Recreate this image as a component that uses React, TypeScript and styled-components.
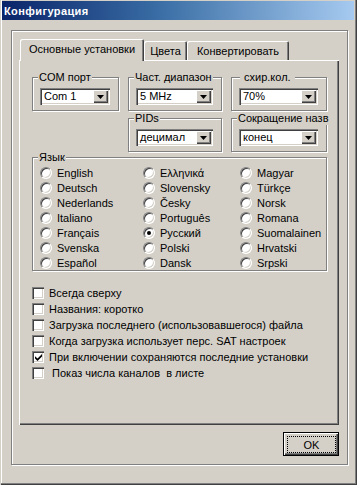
import React from "react";
import styled, { createGlobalStyle } from "styled-components";

const GlobalStyle = createGlobalStyle`
  html, body {
    margin: 0;
    padding: 0;
    background: #d4d0c8;
  }
  body {
    font-family: "Liberation Sans", Arial, sans-serif;
    font-size: 11px;
    color: #000;
  }
`;

const Window = styled.div`
  width: 357px;
  height: 485px;
  box-sizing: border-box;
  padding: 1px 3px 3px 2px;
  background: #d4d0c8;
  box-shadow: inset 1px 0 #d4d0c8, inset -1px -1px #404040, inset -2px -2px #808080,
    inset 2px 0 #fff;
  display: flex;
  flex-direction: column;
`;

const TitleBar = styled.div`
  height: 19px;
  display: flex;
  align-items: center;
  padding-left: 2px;
  background: linear-gradient(to right, #0a246a 0%, #3a6ea5 45%, #a6caf0 100%);
  color: #fff;
  font-weight: bold;
  font-size: 11px;
  letter-spacing: 0.4px;
`;

const Frame = styled.div`
  margin: 10px 6px 0 9px;
  height: 435px;
  box-sizing: border-box;
  border: 1px solid #808080;
  box-shadow: inset 1px 1px #fff, 1px 1px #fff;
  padding: 8px 8px 8px 7px;
  display: flex;
  flex-direction: column;
`;

const TabStrip = styled.div`
  display: flex;
  align-items: flex-end;
  padding-left: 1px;
  height: 21px;
`;

const Tab = styled.div<{ $active?: boolean; $w: number }>`
  position: relative;
  z-index: ${({ $active }) => ($active ? 1 : 0)};
  width: ${({ $w }) => $w}px;
  height: ${({ $active }) => ($active ? 22 : 19)}px;
  margin-bottom: ${({ $active }) => ($active ? -1 : 0)}px;
  box-sizing: border-box;
  background: #d4d0c8;
  border-top-left-radius: 2px;
  border-top-right-radius: 2px;
  box-shadow: inset 1px 1px #fff, inset -1px 0 #404040, inset -2px 0 #808080;
  display: flex;
  align-items: center;
  justify-content: center;
  padding-bottom: ${({ $active }) => ($active ? 3 : 0)}px;
  white-space: nowrap;
`;

const Panel = styled.div`
  height: 365px;
  box-sizing: border-box;
  box-shadow: inset 1px 1px #fff, inset -1px -1px #404040, inset -2px -2px #808080;
  padding: 17px 12px 0 13px;
`;

const GroupGrid = styled.div`
  display: grid;
  grid-template-columns: 87px 94px 96px;
  column-gap: 9px;
  row-gap: 7px;
`;

const Group = styled.div<{ $h: number; $col?: number }>`
  grid-column: ${({ $col }) => $col ?? "auto"};
  height: ${({ $h }) => $h}px;
  box-sizing: border-box;
  border: 1px solid #808080;
  box-shadow: inset 1px 1px #fff, 1px 1px #fff;
  white-space: nowrap;
`;

const Legend = styled.div<{ $indent?: number }>`
  width: fit-content;
  height: 13px;
  line-height: 13px;
  margin: -7px 0 -6px ${({ $indent }) => $indent ?? 5}px;
  padding: 0 1px;
  background: #d4d0c8;
  white-space: pre;
`;

const ComboWrap = styled.div`
  padding: 10px 8px 0 7px;
`;

const Combo = styled.div`
  height: 17px;
  box-sizing: border-box;
  background: #fff;
  box-shadow: inset 1px 1px #808080, inset 2px 2px #404040, inset -1px -1px #fff,
    inset -2px -2px #d4d0c8;
  display: flex;
  align-items: center;
  padding: 2px;
`;

const ComboText = styled.span`
  flex: 1;
  padding-left: 2px;
  line-height: 13px;
`;

const DropButton = styled.div`
  width: 15px;
  height: 13px;
  box-sizing: border-box;
  background: #d4d0c8;
  box-shadow: inset 1px 1px #fff, inset -1px -1px #404040, inset -2px -2px #808080;
  display: flex;
  align-items: center;
  justify-content: center;
`;

const LangGroup = styled(Group)`
  margin-top: 5px;
  width: 295px;
`;

const RadioGrid = styled.div`
  display: grid;
  grid-template-columns: 103px 97px 1fr;
  grid-template-rows: repeat(7, 15px);
  grid-auto-flow: column;
  padding: 7px 0 0 7px;
`;

const Option = styled.label`
  display: flex;
  align-items: center;
  gap: 5px;
  white-space: nowrap;
`;

const CheckOption = styled(Option)`
  white-space: pre;
`;

const RadioDot = styled.span<{ $on?: boolean }>`
  width: 12px;
  height: 12px;
  flex: none;
  box-sizing: border-box;
  border-radius: 50%;
  border: 1px solid;
  border-color: #808080 #fff #fff #808080;
  background: #fff;
  box-shadow: inset 1px 1px #404040, inset -1px -1px #d4d0c8;
  display: flex;
  align-items: center;
  justify-content: center;
  &::after {
    content: "";
    width: 4px;
    height: 4px;
    border-radius: 50%;
    background: ${({ $on }) => ($on ? "#000" : "transparent")};
  }
`;

const CheckList = styled.div`
  margin-top: 14px;
  display: grid;
  grid-auto-rows: 16px;
`;

const CheckBox = styled.span`
  width: 12px;
  height: 12px;
  flex: none;
  box-sizing: border-box;
  background: #fff;
  box-shadow: inset 1px 1px #808080, inset 2px 2px #404040, inset -1px -1px #fff,
    inset -2px -2px #d4d0c8;
  display: flex;
  align-items: center;
  justify-content: center;
`;

const Footer = styled.div`
  display: flex;
  justify-content: flex-end;
  margin-top: 7px;
`;

const OkButton = styled.button`
  width: 56px;
  height: 24px;
  box-sizing: border-box;
  padding: 3px 2px 2px 3px;
  border: 1px solid #000;
  background: #d4d0c8;
  box-shadow: inset 1px 1px #fff, inset -1px -1px #404040, inset -2px -2px #808080;
  font-family: "Liberation Sans", Arial, sans-serif;
  font-size: 11px;
  color: #000;
  display: flex;
`;

const FocusRect = styled.span`
  flex: 1;
  border: 1px dotted #000;
  display: flex;
  align-items: center;
  justify-content: center;
`;

const Arrow = () => (
  <svg width="7" height="4" viewBox="0 0 7 4">
    <path d="M0 0h7L3.5 4z" fill="#000" />
  </svg>
);

const Check = () => (
  <svg width="7" height="7" viewBox="0 0 7 7">
    <path d="M0 2.2 L2.5 4.6 L7 0 V2.4 L2.5 7 L0 4.6 Z" fill="#000" />
  </svg>
);

const ComboGroup = ({
  label,
  value,
  indent,
  col,
}: {
  label: string;
  value: string;
  indent?: number;
  col?: number;
}) => (
  <Group $h={34} $col={col}>
    <Legend $indent={indent}>{label}</Legend>
    <ComboWrap>
      <Combo>
        <ComboText>{value}</ComboText>
        <DropButton>
          <Arrow />
        </DropButton>
      </Combo>
    </ComboWrap>
  </Group>
);

const languages = [
  "English", "Deutsch", "Nederlands", "Italiano", "Français", "Svenska", "Español",
  "Ελληνικά", "Slovensky", "Česky", "Português", "Русский", "Polski", "Dansk",
  "Magyar", "Türkçe", "Norsk", "Romana", "Suomalainen", "Hrvatski", "Srpski",
];

const options = [
  { text: "Всегда сверху", on: false },
  { text: "Названия: коротко", on: false },
  { text: "Загрузка последнего (использовавшегося) файла", on: false },
  { text: "Когда загрузка использует перс. SAT настроек", on: false },
  { text: "При включении сохраняются последние установки", on: true },
  { text: " Показ числа каналов  в листе", on: false },
];

export default function App() {
  return (
    <>
      <GlobalStyle />
      <Window>
        <TitleBar>Конфигурация</TitleBar>
        <Frame>
          <TabStrip>
            <Tab $active $w={124}>Основные установки</Tab>
            <Tab $w={43}>Цвета</Tab>
            <Tab $w={102}>Конвертировать</Tab>
          </TabStrip>
          <Panel>
            <GroupGrid>
              <ComboGroup label="COM порт" value="Com 1" />
              <ComboGroup label="Част. диапазон" value="5 MHz" />
              <ComboGroup label=" схир.кол. " value="70%" indent={8} />
              <ComboGroup label="PIDs" value="децимал" col={2} />
              <ComboGroup label="Сокращение назв" value="конец" indent={5} />
            </GroupGrid>
            <LangGroup $h={114}>
              <Legend>Язык</Legend>
              <RadioGrid>
                {languages.map((l) => (
                  <Option key={l}>
                    <RadioDot $on={l === "Русский"} />
                    {l}
                  </Option>
                ))}
              </RadioGrid>
            </LangGroup>
            <CheckList>
              {options.map((o) => (
                <CheckOption key={o.text}>
                  <CheckBox>{o.on && <Check />}</CheckBox>
                  {o.text}
                </CheckOption>
              ))}
            </CheckList>
          </Panel>
          <Footer>
            <OkButton>
              <FocusRect>OK</FocusRect>
            </OkButton>
          </Footer>
        </Frame>
      </Window>
    </>
  );
}
